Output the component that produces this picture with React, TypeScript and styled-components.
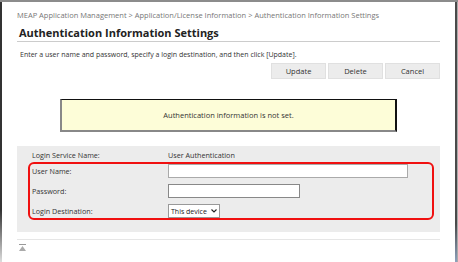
import styled, { createGlobalStyle } from 'styled-components';

const GlobalStyle = createGlobalStyle`
  html, body {
    margin: 0;
    padding: 0;
    background: #fff;
  }
  body {
    font-family: 'Open Sans', 'Noto Sans', sans-serif;
    color: #333;
  }
`;

const Frame = styled.div`
  width: 458px;
  height: 262px;
  display: flex;
  box-sizing: border-box;
  border-top: 2px solid #8c8c8c;
  overflow: hidden;
  background: #fff;
`;

const LeftEdge = styled.div`
  width: 2px;
  flex: none;
  background: linear-gradient(#333 0%, #333 80%, #ddd 100%);
`;

const RightEdge = styled.div`
  width: 3px;
  flex: none;
  border-left: 2px solid #4a4a4a;
  box-sizing: border-box;
  background: #aaa;
  border-image: linear-gradient(#4a4a4a 0%, #4a4a4a 85%, #8fa4c0 100%) 1;
`;

const Content = styled.div`
  flex: 1;
  padding: 7px 15px 0 15px;
  min-width: 0;
`;

const Breadcrumb = styled.div`
  font-size: 7.5px;
  line-height: 12px;
  color: #777;
  white-space: nowrap;
`;

const Title = styled.h1`
  margin: 4px 0 0;
  padding-left: 2px;
  font-size: 11px;
  line-height: 16px;
  font-weight: 700;
  color: #222;
  border-bottom: 1px solid #ccc;
  white-space: nowrap;
`;

const Hint = styled.p`
  margin: 7px 0 0;
  padding-left: 3px;
  font-size: 7px;
  line-height: 12px;
  color: #333;
  white-space: nowrap;
`;

const Toolbar = styled.div`
  display: flex;
  justify-content: flex-end;
  gap: 2px;
  margin-top: 2px;
`;

const Button = styled.button`
  width: 55px;
  height: 16px;
  padding: 0;
  border: 1px solid #e0e0e0;
  background: #ececec;
  font-family: inherit;
  font-size: 7.5px;
  color: #333;
`;

const Notice = styled.div`
  width: 337px;
  height: 33px;
  margin: 20px auto 0;
  box-sizing: border-box;
  display: flex;
  align-items: center;
  justify-content: center;
  background: #fdfdd8;
  border-top: 1px solid #111;
  border-right: 2px solid #111;
  border-left: 2px solid #888;
  border-bottom: 2px solid #888;
  font-size: 7.5px;
  color: #333;
`;

const Panel = styled.div`
  margin-top: 14px;
  background: #ececec;
  padding: 1px 6px 12px 11px;
`;

const Row = styled.div<{ $inset?: boolean }>`
  display: grid;
  grid-template-columns: 136px 1fr;
  align-items: center;
  height: ${(p) => (p.$inset ? 14 : 15)}px;
  padding-left: ${(p) => (p.$inset ? 0 : 4)}px;
  font-size: 7.2px;
  color: #333;
  white-space: nowrap;
`;

const Highlight = styled.div`
  border: 2px solid #f01010;
  border-radius: 6px;
  padding: 0 2px;
  display: flex;
  flex-direction: column;
  gap: 6px;
`;

const TextInput = styled.input<{ $width: number; $dark?: boolean }>`
  width: ${(p) => p.$width}px;
  height: 14px;
  box-sizing: border-box;
  margin: 0;
  border: 1px solid ${(p) => (p.$dark ? '#888' : '#aaa')};
  background: #fff;
  outline: none;
`;

const Select = styled.div`
  width: 52px;
  height: 14px;
  box-sizing: border-box;
  border: 1px solid #999;
  background: #fff;
  display: flex;
  align-items: center;
  justify-content: space-between;
  padding: 0 2px 0 2px;
  font-size: 7px;
  color: #222;
`;

const Divider = styled.div`
  margin-top: 7px;
  border-top: 1px solid #e6e6e6;
`;

const TopLink = styled.div`
  padding: 4px 0 0 2px;
  line-height: 0;
`;

const Chevron = () => (
  <svg width="6" height="4" viewBox="0 0 6 4">
    <path d="M0.5 0.5 L3 3 L5.5 0.5" fill="none" stroke="#222" strokeWidth="1.1" />
  </svg>
);

const ToTopIcon = () => (
  <svg width="7" height="8" viewBox="0 0 7 8">
    <rect x="0" y="0" width="7" height="1" fill="#999" />
    <path d="M3.5 2 L7 7 L0 7 Z" fill="#aaa" />
  </svg>
);

export default function App() {
  return (
    <Frame>
      <GlobalStyle />
      <LeftEdge />
      <Content>
        <Breadcrumb>
          MEAP Application Management &gt; Application/License Information &gt; Authentication
          Information Settings
        </Breadcrumb>
        <Title>Authentication Information Settings</Title>
        <Hint>Enter a user name and password, specify a login destination, and then click [Update].</Hint>
        <Toolbar>
          <Button>Update</Button>
          <Button>Delete</Button>
          <Button>Cancel</Button>
        </Toolbar>
        <Notice>Authentication information is not set.</Notice>
        <Panel>
          <Row>
            <span>Login Service Name:</span>
            <span>User Authentication</span>
          </Row>
          <Highlight>
            <Row $inset>
              <span>User Name:</span>
              <TextInput $width={240} />
            </Row>
            <Row $inset>
              <span>Password:</span>
              <TextInput $width={132} $dark type="password" />
            </Row>
            <Row $inset>
              <span>Login Destination:</span>
              <Select>
                <span>This device</span>
                <Chevron />
              </Select>
            </Row>
          </Highlight>
        </Panel>
        <Divider />
        <TopLink>
          <ToTopIcon />
        </TopLink>
      </Content>
      <RightEdge />
    </Frame>
  );
}
